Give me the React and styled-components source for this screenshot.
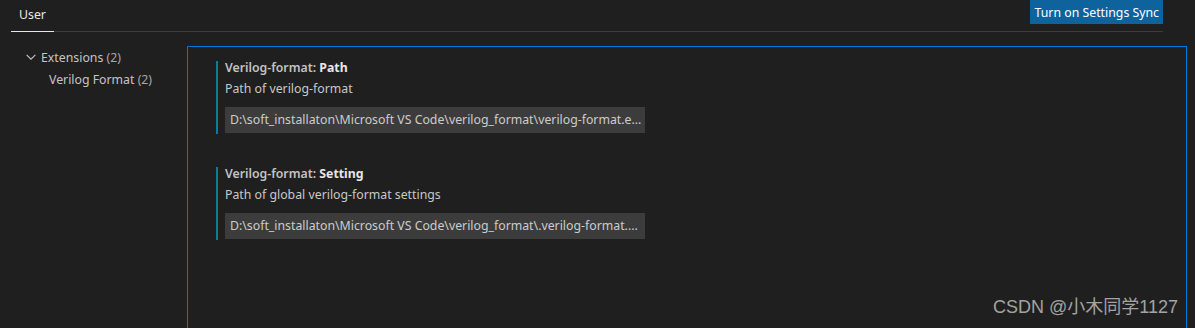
import styled, { createGlobalStyle } from "styled-components";

const GlobalStyle = createGlobalStyle`
  *, *::before, *::after {
    box-sizing: border-box;
  }
  html, body {
    margin: 0;
    padding: 0;
    background: #1f1f1f;
  }
  body {
    font-family: "Noto Sans", "Liberation Sans", sans-serif;
    font-size: 12.3px;
    color: #cccccc;
  }
`;

const settings = [
  {
    category: "Verilog-format: ",
    name: "Path",
    description: "Path of verilog-format",
    value: "D:\\soft_installaton\\Microsoft VS Code\\verilog_format\\verilog-format.e...",
  },
  {
    category: "Verilog-format: ",
    name: "Setting",
    description: "Path of global verilog-format settings",
    value: "D:\\soft_installaton\\Microsoft VS Code\\verilog_format\\.verilog-format....",
  },
];

export default function App() {
  return (
    <>
      <GlobalStyle />
      <Page>
        <Header>
          <Tab>User</Tab>
          <SyncButton>Turn on Settings Sync</SyncButton>
        </Header>
        <Body>
          <Tree>
            <TreeRow>
              <Chevron viewBox="0 0 16 16">
                <path d="M3 5.5l5 5 5-5" fill="none" stroke="currentColor" strokeWidth="1.2" />
              </Chevron>
              <span>
                Extensions <Count>(2)</Count>
              </span>
            </TreeRow>
            <TreeRow $indent>
              <span>
                Verilog Format <Count>(2)</Count>
              </span>
            </TreeRow>
          </Tree>
          <Panel>
            {settings.map((s) => (
              <SettingItem key={s.name}>
                <Title>
                  <span>{s.category}</span>
                  <strong>{s.name}</strong>
                </Title>
                <Description>{s.description}</Description>
                <ValueBox>{s.value}</ValueBox>
              </SettingItem>
            ))}
          </Panel>
        </Body>
        <Watermark>CSDN @小木同学1127</Watermark>
      </Page>
    </>
  );
}

const Page = styled.div`
  position: relative;
  width: 1195px;
  height: 328px;
  overflow: hidden;
`;

const Header = styled.div`
  display: flex;
  justify-content: space-between;
  align-items: flex-start;
  margin-left: 11px;
  width: 1152px;
  height: 32px;
  border-bottom: 1px solid #3c3c3c;
`;

const Tab = styled.div`
  height: 32px;
  padding: 0 8px;
  line-height: 29px;
  color: #e7e7e7;
  border-bottom: 1px solid #e7e7e7;
`;

const SyncButton = styled.button`
  height: 24px;
  padding: 0 4px 0 5px;
  border: none;
  background: #0e639c;
  color: #ffffff;
  font-family: inherit;
  font-size: 12.3px;
  cursor: pointer;
`;

const Body = styled.div`
  display: flex;
  height: 296px;
`;

const Tree = styled.div`
  flex-shrink: 0;
  width: 176px;
  margin-left: 11px;
  padding-top: 14px;
`;

const TreeRow = styled.div`
  display: flex;
  align-items: center;
  gap: 3px;
  height: 22px;
  padding-left: ${(p) => (p.$indent ? "38px" : "13px")};
  color: #c5c5c5;
  white-space: pre;
`;

const Chevron = styled.svg`
  width: 14px;
  height: 14px;
  color: #c5c5c5;
`;

const Count = styled.span`
  color: #a8a8a8;
`;

const Panel = styled.div`
  flex-shrink: 0;
  width: 1000px;
  margin-top: 14px;
  border: 1px solid #0078d4;
  border-bottom: none;
  padding: 14px 0 0 28px;
  display: flex;
  flex-direction: column;
  gap: 33px;
`;

const SettingItem = styled.div`
  border-left: 2px solid #0c7a9e;
  padding: 0 0 1px 7px;
`;

const Title = styled.div`
  line-height: 14px;
  span {
    color: #c2c2c2;
    font-weight: 600;
  }
  strong {
    color: #e7e7e7;
    font-weight: 700;
  }
`;

const Description = styled.div`
  margin-top: 7px;
  line-height: 14px;
  color: #c8c8c8;
`;

const ValueBox = styled.div`
  margin-top: 11px;
  width: 420px;
  height: 26px;
  padding-left: 5px;
  line-height: 26px;
  background: #3c3c3c;
  color: #cccccc;
  white-space: nowrap;
  overflow: hidden;
`;

const Watermark = styled.div`
  position: absolute;
  right: 17px;
  bottom: 10px;
  font-family: "Liberation Sans", "Noto Sans CJK SC", sans-serif;
  font-size: 18px;
  color: #a3a3a3;
`;
